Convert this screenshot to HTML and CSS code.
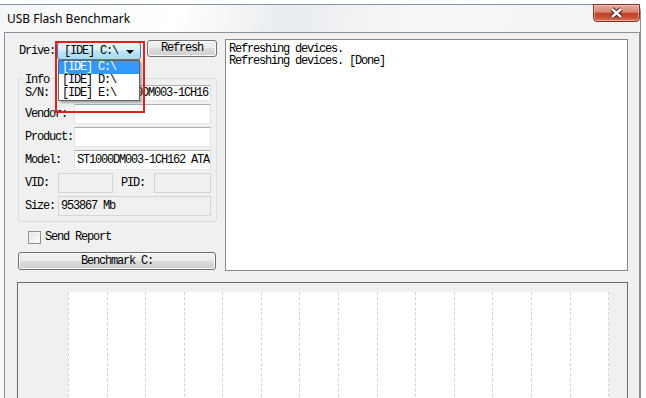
FILE: index.html
```html
<!DOCTYPE html>
<html>
<head>
<meta charset="utf-8"/>
<title>USB Flash Benchmark</title>
<link rel="stylesheet" href="styles.css">
</head>
<body>
<div class="window">
<div class="titlebar">
<span class="title">USB Flash Benchmark</span>
<div class="close" title="关闭">
<svg width="45" height="16" viewBox="0 0 45 16">
<path d="M18 4 L27 12 M27 4 L18 12" stroke="#4a1a10" stroke-width="4.4" fill="none"/>
<path d="M18 4 L27 12 M27 4 L18 12" stroke="#ffffff" stroke-width="2.4" fill="none"/>
</svg>
</div>
</div>
<div class="client">
<div class="top">
<div class="side">
<div class="drive-row">
<span class="drive-lbl">Drive:</span>
<div class="combo">
<span>[IDE] C:\</span>
<span class="arrow"></span>
<ul class="droplist">
<li class="sel">[IDE] C:\</li>
<li>[IDE] D:\</li>
<li>[IDE] E:\</li>
</ul>
<div class="mark"></div>
</div>
<div class="btn refresh">Refresh</div>
</div>
<div class="group">
<span class="group-title">Info</span>
<div class="row first">
<span class="lbl">S/N:</span>
<div class="field right">ST1000DM003-1CH16</div>
</div>
<div class="row">
<span class="lbl">Vendor:</span>
<div class="field"></div>
</div>
<div class="row">
<span class="lbl">Product:</span>
<div class="field"></div>
</div>
<div class="row">
<span class="lbl">Model:</span>
<div class="field">ST1000DM003-1CH162 ATA</div>
</div>
<div class="row">
<span class="lbl short">VID:</span>
<div class="field off vid"></div>
<span class="lbl short pid">PID:</span>
<div class="field off"></div>
</div>
<div class="row">
<span class="lbl short">Size:</span>
<div class="field off">953867 Mb</div>
</div>
</div>
<div class="check-row">
<span class="checkbox"></span>
<span>Send Report</span>
</div>
<div class="btn bench">Benchmark C:</div>
</div>
<div class="log">Refreshing devices.<br>Refreshing devices. [Done]</div>
</div>
<div class="chart">
<div class="plot">
<span class="col"></span><span class="col"></span><span class="col"></span><span class="col"></span>
<span class="col"></span><span class="col"></span><span class="col"></span><span class="col"></span>
<span class="col"></span><span class="col"></span><span class="col"></span><span class="col"></span>
<span class="col"></span><span class="col"></span>
</div>
</div>
</div>
</div>
</body>
</html>
```

FILE: styles.css
```css
body {
margin: 0;
background-color: #ffffff;
overflow: hidden;
font-family: 'Liberation Mono', 'Noto Sans CJK SC', monospace;
font-size: 12px;
letter-spacing: -1.2px;
color: #000000;
}
.window {
box-sizing: border-box;
width: 641px;
height: 420px;
margin-top: 4px;
padding-left: 4px;
border-top: 1px solid #8593a1;
border-right: 1px solid #8593a1;
border-top-right-radius: 7px;
background: linear-gradient(100deg, #f4f6f8 0%, #ffffff 25%, #e9ecef 40%, #f7f8f9 60%, #eef0f2 100%);
}
.titlebar {
display: flex;
align-items: flex-start;
height: 27px;
}
.title {
margin: 6px 0 0 3px;
font-family: 'Noto Sans', sans-serif;
font-size: 12px;
line-height: 15px;
letter-spacing: 0;
color: #000000;
}
.close {
box-sizing: border-box;
width: 47px;
height: 18px;
margin: -1px 0 0 auto;
border: 1px solid #7e3428;
border-radius: 0 0 4px 4px;
background: linear-gradient(#e7a999 0%, #d98874 45%, #c2432a 50%, #c64a31 75%, #dd7d64 100%);
box-shadow: inset 0 0 0 1px rgba(255, 220, 210, 0.45);
}
.close svg {
display: block;
}
.client {
box-sizing: border-box;
height: 400px;
padding: 6px 11px 0 12px;
border: 1px solid #8a929c;
background-color: #f0f0f0;
}
.top {
display: flex;
gap: 8px;
}
.side {
display: flex;
flex-direction: column;
width: 200px;
}
.log {
flex: 1;
box-sizing: border-box;
height: 232px;
padding: 3px 3px;
border: 1px solid #828790;
background-color: #ffffff;
line-height: 12px;
white-space: nowrap;
}
.drive-row {
display: flex;
align-items: flex-start;
height: 20px;
margin-top: 1px;
}
.drive-lbl {
width: 38px;
padding-left: 2px;
margin-top: 2px;
line-height: 18px;
}
.combo {
position: relative;
display: flex;
align-items: center;
box-sizing: border-box;
width: 84px;
height: 18px;
margin-top: 2px;
padding-left: 6px;
border: 1px solid #3c7fb1;
border-radius: 3px;
background: linear-gradient(#eaf6fd 0%, #d9f0fc 45%, #bee6fd 50%, #a7d9f5 100%);
line-height: 16px;
z-index: 2;
}
.arrow {
margin: 1px 6px 0 auto;
border-left: 4px solid transparent;
border-right: 4px solid transparent;
border-top: 4px solid #000000;
}
.droplist {
position: absolute;
top: 17px;
left: 0;
box-sizing: border-box;
width: 82px;
margin: 0;
padding: 0;
list-style: none;
border: 1px solid #646464;
background-color: #ffffff;
box-shadow: 2px 2px 2px rgba(0, 0, 0, 0.3);
}
.droplist li {
height: 13px;
padding-left: 3px;
line-height: 13px;
}
.droplist li.sel {
background-color: #3399ff;
color: #ffffff;
}
.mark {
position: absolute;
top: -2px;
left: -3px;
width: 86px;
height: 68px;
border: 2px solid #e51d1d;
pointer-events: none;
}
.btn {
box-sizing: border-box;
border: 1px solid #707070;
border-radius: 3px;
background: linear-gradient(#f2f2f2 0%, #ebebeb 49%, #dddddd 50%, #cfcfcf 100%);
box-shadow: inset 0 0 0 1px #fbfbfb;
text-align: center;
}
.refresh {
width: 70px;
height: 17px;
margin-left: 6px;
line-height: 15px;
}
.group {
display: flex;
flex-direction: column;
box-sizing: border-box;
width: 199px;
margin: 18px 0 0 1px;
padding: 0 5px 5px 6px;
border: 1px solid #d5dfe5;
border-radius: 3px;
}
.group-title {
width: max-content;
margin: -4px 0 0 -1px;
padding: 0 1px;
background-color: #f0f0f0;
line-height: 10px;
}
.row {
display: flex;
align-items: center;
height: 20px;
line-height: 20px;
}
.row.first {
height: 16px;
line-height: 16px;
}
.row.first .field {
height: 16px;
line-height: 14px;
}
.row + .row {
margin-top: 3px;
}
.lbl {
width: 49px;
white-space: nowrap;
}
.lbl.short {
width: 33px;
}
.lbl.pid {
margin-left: 8px;
}
.field {
flex: 1;
box-sizing: border-box;
height: 20px;
padding: 0 2px;
border: 1px solid;
border-color: #abadb3 #dbdfe6 #e3e9ef #e2e3ea;
background-color: #ffffff;
line-height: 18px;
white-space: nowrap;
overflow: hidden;
}
.field.right {
text-align: right;
}
.field.off {
border-color: #d5d5d5;
background-color: #f0f0f0;
}
.field.vid {
flex: none;
width: 55px;
}
.check-row {
display: flex;
align-items: center;
height: 13px;
margin-top: 9px;
line-height: 13px;
}
.checkbox {
box-sizing: border-box;
width: 13px;
height: 13px;
margin: 0 4px 0 11px;
border: 1px solid #8e8f8f;
background: linear-gradient(135deg, #dcdcdc 0%, #f6f6f6 70%, #ffffff 100%);
box-shadow: inset 0 0 0 1px #f4f4f4;
}
.bench {
width: 198px;
height: 18px;
margin: 8px 0 0 1px;
line-height: 16px;
}
.chart {
box-sizing: border-box;
height: 140px;
margin-top: 11px;
padding: 9px 18px 0 50px;
border: 1px solid #696969;
}
.plot {
display: flex;
height: 130px;
background-color: #ffffff;
}
.col {
flex: 1;
border-left: 1px dashed #d2d2d2;
}
.col:last-child {
border-right: 1px dashed #d2d2d2;
}
```
